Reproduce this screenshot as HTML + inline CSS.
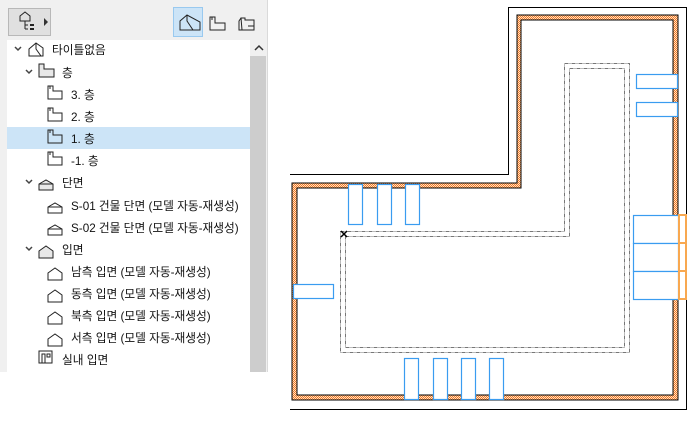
<!DOCTYPE html>
<html><head><meta charset="utf-8"><style>
*{margin:0;padding:0;box-sizing:border-box}
body{width:694px;height:429px;background:#fff;position:relative;overflow:hidden;font-family:"Liberation Sans","Noto Sans CJK KR",sans-serif;font-size:11.7px;color:#111}
#panel{position:absolute;left:0;top:0;width:268px;height:372px;background:#f0f0f0;border-right:1px solid #dadada}
#tree{position:absolute;left:7px;top:40px;width:243px;height:332px;background:#fff}
#sb{position:absolute;left:250px;top:40px;width:16px;height:332px;background:#f0f0f0}
#sbt{position:absolute;left:250px;top:56px;width:16px;height:316px;background:#cdcdcd}
.row{position:absolute;left:0;height:22px;line-height:22px;white-space:nowrap}
.sel{background:#cce4f7}
.t{position:absolute;white-space:nowrap}
</style></head><body>
<div id="panel">
  <div style="position:absolute;left:8px;top:8px;width:43px;height:28px;background:#e0e0e0;border:1px solid #b8b8b8"></div>
  <svg style="position:absolute;left:8px;top:8px" width="43" height="28"><path d="M12 8 l5-4 l5 4 v5 h-10z M17 13 v8 M17 17 h3 M17 21 h3" fill="none" stroke="#222" stroke-width="1"/><rect x="22" y="16" width="4" height="2" fill="#222"/><rect x="22" y="20" width="4" height="2" fill="#222"/><path d="M36 10 l4 4 l-4 4z" fill="#333"/></svg>
  <div style="position:absolute;left:173px;top:7px;width:30px;height:30px;background:#cce4f7;border:1px solid #99c9ef"></div>
  <svg style="position:absolute;left:173px;top:7px" width="96" height="30"><path d="M7 23 v-9 l7-6 l13 7 v8z M14 8 v6 l6 9" fill="none" stroke="#222"/><path d="M37 10 h5 v6 h10 v7 h-15z M39 10 l0 3" fill="none" stroke="#222"/><path d="M68 11 h4 v2 h9 v10 h-12 z M68 11 l-2 3 v9 l3 0 M75 19 h6 v4" fill="none" stroke="#222"/></svg>
</div>
<div id="tree">
  <div class="row sel" style="top:87px;width:243px;height:22px"></div>
</div>
<div id="sb"></div><div id="sbt"></div>
<svg style="position:absolute;left:254px;top:44px" width="10" height="8"><path d="M1 6 l4-4 l4 4" fill="none" stroke="#333" stroke-width="1.5"/></svg>
<svg style="position:absolute;left:0;top:0" width="250" height="372" fill="none" stroke="#222" stroke-width="1">
 <g stroke="#444" stroke-width="1.5"><path d="M15 47 l3 3 l3-3"/><path d="M26 70 l3 3 l3-3"/><path d="M26 180 l3 3 l3-3"/><path d="M26 247 l3 3 l3-3"/></g>
 <path d="M29 56 v-7 l7-6 l7 5 v8z M36 43 v6 l5 7" />
 <path d="M39 64 h5 v5 h10 v8 h-15z" fill="#e8e8e8"/>
 <g><path d="M48 86 h5 v5 h9 v8 h-14z M50 86 v3"/><path d="M48 108 h5 v5 h9 v8 h-14z M50 108 v3"/><path d="M48 130 h5 v5 h9 v8 h-14z M50 130 v3"/><path d="M48 152 h5 v5 h9 v8 h-14z M50 152 v3"/></g>
 <path d="M39 184 l7-4 l7 4 v6 h-14z" fill="#e8e8e8"/><path d="M39 184 h14"/>
 <path d="M48 207 l7-4 l7 4 v6 h-14z M48 207 h14"/>
 <path d="M48 229 l7-4 l7 4 v6 h-14z M48 229 h14"/>
 <path d="M39 251 l7-5 l7 5 v7 h-14z" fill="#e8e8e8"/>
 <path d="M48 273 l7-5 l7 5 v7 h-14z"/><path d="M48 295 l7-5 l7 5 v7 h-14z"/><path d="M48 317 l7-5 l7 5 v7 h-14z"/><path d="M48 339 l7-5 l7 5 v7 h-14z"/>
 <path d="M39 351 h13 v12 h-13z M42 363 v-9 h3 v9 M47 354 h3 v3 h-3z"/>
</svg>
<div class="t" style="left:52px;top:41px">타이틀없음</div>
<div class="t" style="left:62px;top:64px">층</div>
<div class="t" style="left:71px;top:86px">3. 층</div>
<div class="t" style="left:71px;top:108px">2. 층</div>
<div class="t" style="left:71px;top:130px">1. 층</div>
<div class="t" style="left:71px;top:152px">-1. 층</div>
<div class="t" style="left:62px;top:174px">단면</div>
<div class="t" style="left:71px;top:197px">S-01 건물 단면 (모델 자동-재생성)</div>
<div class="t" style="left:71px;top:219px">S-02 건물 단면 (모델 자동-재생성)</div>
<div class="t" style="left:62px;top:241px">입면</div>
<div class="t" style="left:71px;top:263px">남측 입면 (모델 자동-재생성)</div>
<div class="t" style="left:71px;top:285px">동측 입면 (모델 자동-재생성)</div>
<div class="t" style="left:71px;top:307px">북측 입면 (모델 자동-재생성)</div>
<div class="t" style="left:71px;top:329px">서측 입면 (모델 자동-재생성)</div>
<div class="t" style="left:62px;top:351px">실내 입면</div>

<svg style="position:absolute;left:0;top:0" width="694" height="429">
 <defs><pattern id="h" width="2" height="2" patternUnits="userSpaceOnUse"><rect width="2" height="2" fill="#fde0c8"/><rect width="1" height="1" fill="#f57a20"/><rect x="1" y="1" width="1" height="1" fill="#f57a20"/></pattern></defs>
 <path d="M290 174.5 H508.5 V7.5 H686.5 V409.5 H290" fill="none" stroke="#000"/>
 <path d="M292 183 H517 V15 H678 V400 H292 Z M297 188 V395 H673 V20 H521 V188 Z" fill="url(#h)" fill-rule="evenodd" stroke="#000"/>
 <g fill="none" stroke="#777" stroke-dasharray="4 1 1 1">
  <path d="M340.5 231.5 H564.5 V63.5 H629.5 V352.5 H340.5 Z"/>
  <path d="M345.5 236.5 H569.5 V68.5 H624.5 V347.5 H345.5 Z"/>
 </g>
 <g fill="#fff" stroke="#3a9cf0" stroke-width="1.2">
  <rect x="348.5" y="184.5" width="14" height="40"/><rect x="377.5" y="184.5" width="14" height="40"/><rect x="405.5" y="184.5" width="14" height="40"/>
  <rect x="404.5" y="358.5" width="14" height="41"/><rect x="433.5" y="358.5" width="14" height="41"/><rect x="461.5" y="358.5" width="14" height="41"/><rect x="489.5" y="358.5" width="14" height="41"/>
  <rect x="636.5" y="74.5" width="41" height="14"/><rect x="636.5" y="102.5" width="41" height="14"/>
  <rect x="633.5" y="215.5" width="45" height="28"/><rect x="633.5" y="243.5" width="45" height="28"/><rect x="633.5" y="271.5" width="45" height="28"/>
  <rect x="293.5" y="284.5" width="40" height="14"/>
 </g>
 <g fill="none" stroke="#f8a850" stroke-width="2"><rect x="679" y="215" width="7" height="84"/><path d="M679 243 h7 M679 271 h7"/></g>
 <path d="M341 231 l6 6 M347 231 l-6 6" stroke="#000" stroke-width="1.5"/>
</svg>
</body></html>
